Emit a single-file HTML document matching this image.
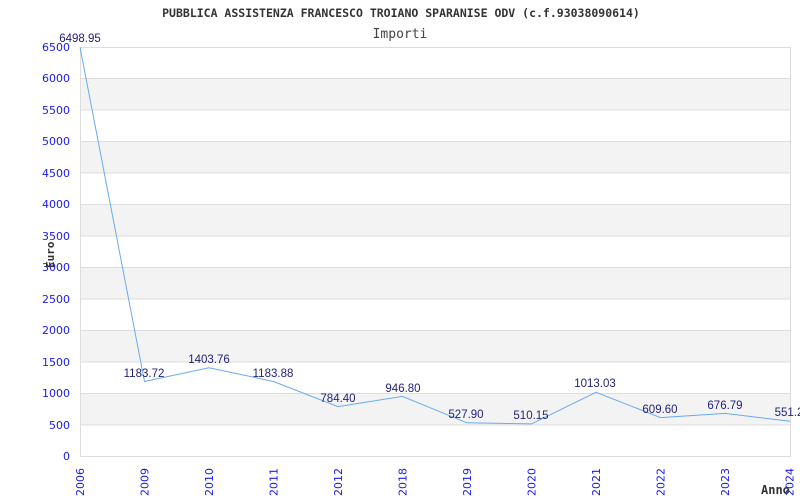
<!DOCTYPE html>
<html><head><meta charset="utf-8"><style>
html,body{margin:0;padding:0;background:#fff;width:800px;height:500px;overflow:hidden}
</style></head><body>
<svg width="800" height="500" xmlns="http://www.w3.org/2000/svg" font-family="DejaVu Sans, Liberation Sans, sans-serif">
<text x="401" y="17" text-anchor="middle" font-family="DejaVu Sans Mono, Liberation Mono, monospace" font-weight="bold" font-size="11.5" fill="#333">PUBBLICA ASSISTENZA FRANCESCO TROIANO SPARANISE ODV (c.f.93038090614)</text>
<text x="400" y="38" text-anchor="middle" font-family="DejaVu Sans Mono, Liberation Mono, monospace" font-size="13" fill="#444">Importi</text>
<g fill="#f3f3f3">
<rect x="80" y="78.5" width="710" height="31.5"/><rect x="80" y="141.4" width="710" height="31.5"/><rect x="80" y="204.3" width="710" height="31.5"/><rect x="80" y="267.3" width="710" height="31.5"/><rect x="80" y="330.2" width="710" height="31.5"/><rect x="80" y="393.1" width="710" height="31.5"/>
</g>
<g stroke="#ddd" stroke-width="1">
<line x1="80" x2="790" y1="47.5" y2="47.5"/><line x1="80" x2="790" y1="78.5" y2="78.5"/><line x1="80" x2="790" y1="110" y2="110"/><line x1="80" x2="790" y1="141.5" y2="141.5"/><line x1="80" x2="790" y1="173" y2="173"/><line x1="80" x2="790" y1="204.5" y2="204.5"/><line x1="80" x2="790" y1="236" y2="236"/><line x1="80" x2="790" y1="267.5" y2="267.5"/><line x1="80" x2="790" y1="299" y2="299"/><line x1="80" x2="790" y1="330.5" y2="330.5"/><line x1="80" x2="790" y1="362" y2="362"/><line x1="80" x2="790" y1="393.5" y2="393.5"/><line x1="80" x2="790" y1="425" y2="425"/><line x1="80" x2="790" y1="456.5" y2="456.5"/>
<line x1="80.5" x2="80.5" y1="47" y2="457"/><line x1="790.5" x2="790.5" y1="47" y2="457"/>
</g>
<g fill="#1a1aee" font-size="11" text-anchor="end">
<text x="70" y="51">6500</text><text x="70" y="82">6000</text><text x="70" y="114">5500</text><text x="70" y="145">5000</text><text x="70" y="177">4500</text><text x="70" y="208">4000</text><text x="70" y="240">3500</text><text x="70" y="271">3000</text><text x="70" y="303">2500</text><text x="70" y="334">2000</text><text x="70" y="366">1500</text><text x="70" y="397">1000</text><text x="70" y="429">500</text><text x="70" y="460">0</text>
</g>
<g fill="#1a1aee" font-size="11">
<text transform="translate(84,496) rotate(-90)">2006</text>
<text transform="translate(148.5,496) rotate(-90)">2009</text>
<text transform="translate(213,496) rotate(-90)">2010</text>
<text transform="translate(277.5,496) rotate(-90)">2011</text>
<text transform="translate(342,496) rotate(-90)">2012</text>
<text transform="translate(406.5,496) rotate(-90)">2018</text>
<text transform="translate(471,496) rotate(-90)">2019</text>
<text transform="translate(535.5,496) rotate(-90)">2020</text>
<text transform="translate(600,496) rotate(-90)">2021</text>
<text transform="translate(664.5,496) rotate(-90)">2022</text>
<text transform="translate(729,496) rotate(-90)">2023</text>
<text transform="translate(793.5,496) rotate(-90)">2024</text>
</g>
<text transform="translate(54,268) rotate(-90)" font-family="DejaVu Sans Mono, monospace" font-size="11" font-weight="bold" fill="#333">Euro</text>
<text x="761" y="494" font-family="DejaVu Sans Mono, monospace" font-size="12" font-weight="bold" fill="#333">Anno</text>
<polyline fill="none" stroke="#6aaaf0" stroke-width="1" points="80,47.1 144.5,381.5 209,367.7 273.5,381.5 338,406.6 402.5,396.4 467,422.8 531.5,423.9 596,392.3 660.5,417.6 725,413.4 790,421.3"/>
<g fill="#22227a" font-size="11.5" text-anchor="middle" font-family="Liberation Sans, sans-serif">
<text x="80" y="42">6498.95</text>
<text x="144" y="377">1183.72</text>
<text x="209" y="363">1403.76</text>
<text x="273" y="377">1183.88</text>
<text x="338" y="402">784.40</text>
<text x="403" y="392">946.80</text>
<text x="466" y="418">527.90</text>
<text x="531" y="419">510.15</text>
<text x="595" y="387">1013.03</text>
<text x="660" y="413">609.60</text>
<text x="725" y="409">676.79</text>
<text x="789" y="416">551.2</text>
</g>
</svg>
</body></html>
